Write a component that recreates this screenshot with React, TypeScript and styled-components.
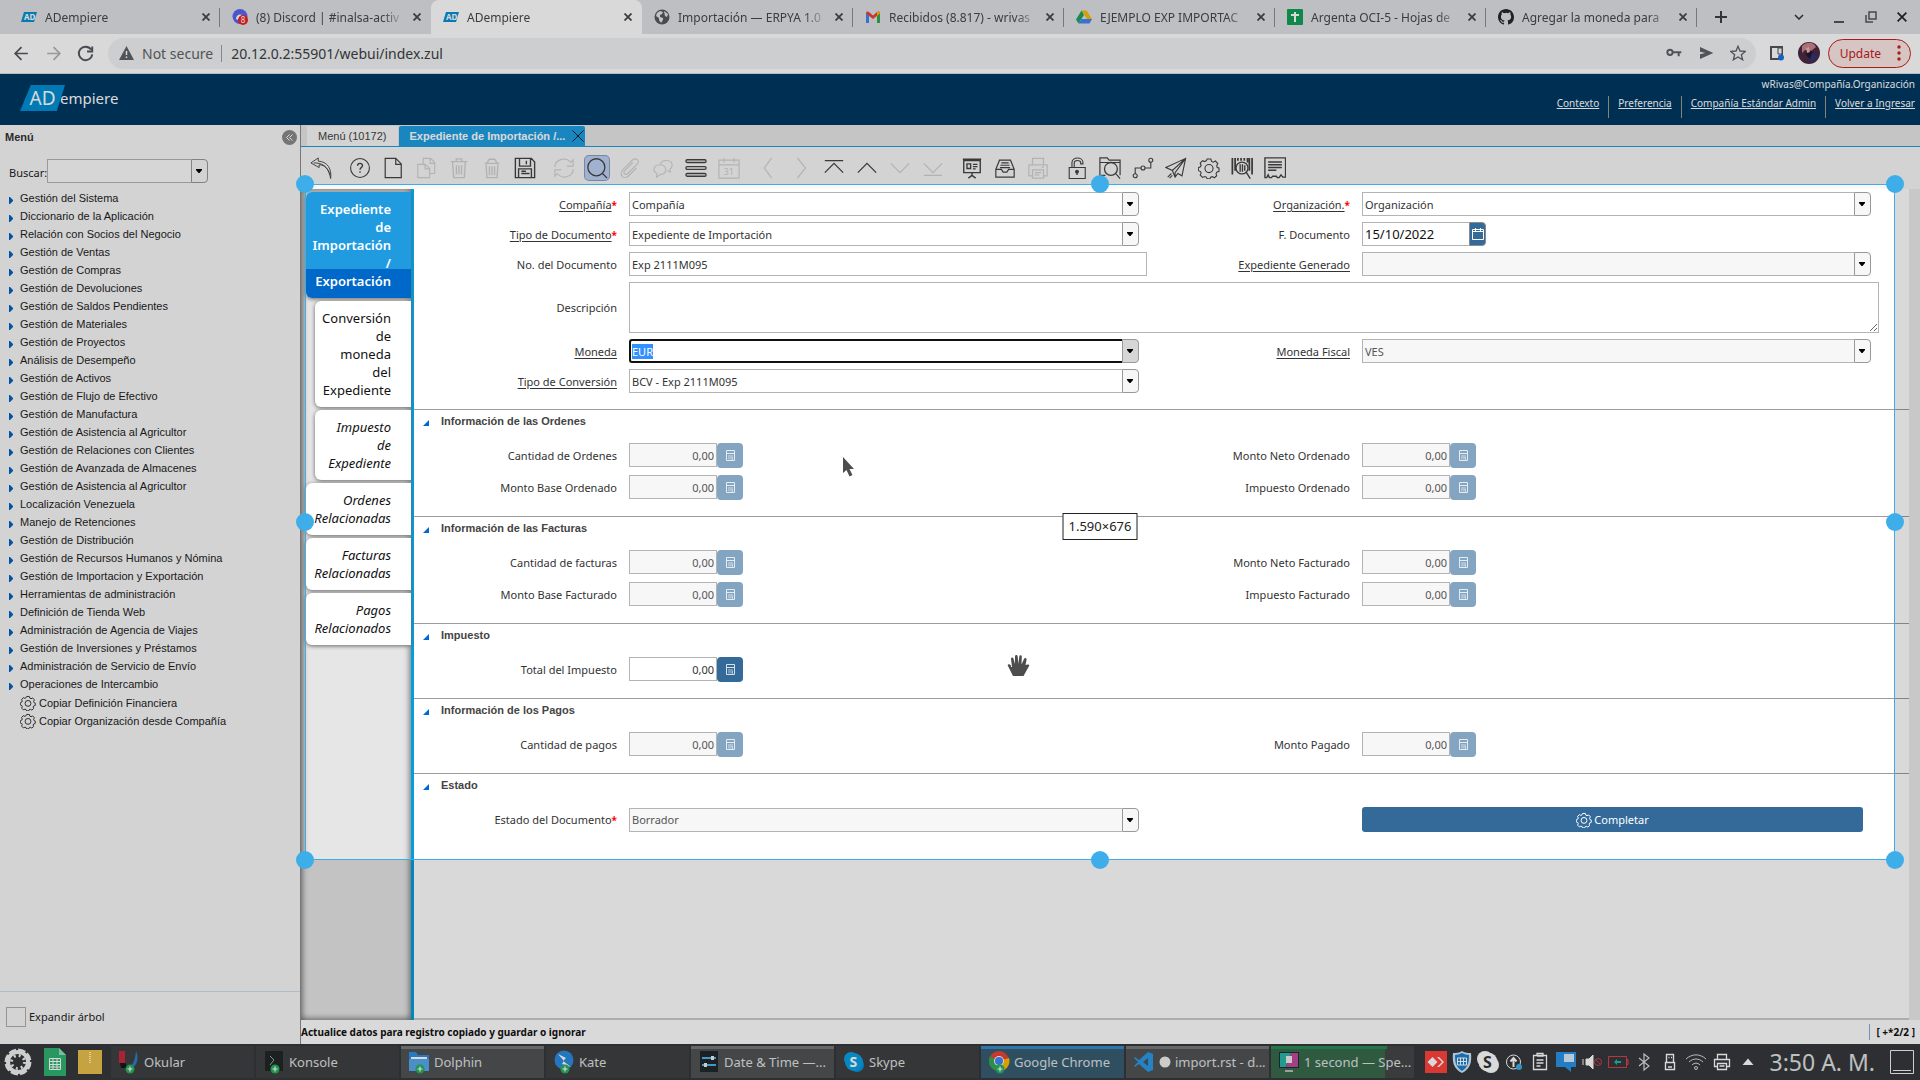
import React, { useEffect, useRef } from "react";
import styled, { createGlobalStyle, css } from "styled-components";

const ui = '"Noto Sans", "Open Sans", sans-serif';
const arial = '"Liberation Sans", Arial, sans-serif';

const GlobalStyle = createGlobalStyle`
  *, *::before, *::after { box-sizing: border-box; }
  body { margin: 0; background: #fff; font-family: ${ui}; font-size: 12px; color: #222; }
  button, input, select, textarea { font: inherit; color: inherit; margin: 0; border-radius: 0; }
  button { border: 0; padding: 0; background: none; }
  ul { list-style: none; margin: 0; padding: 0; }
  svg { display: block; flex: none; }
`;

const Screen = styled.div`
  position: relative;
  display: flex;
  flex-direction: column;
  min-height: 100vh;
  overflow: hidden;
`;

/* ---------- browser ---------- */
const TabStrip = styled.div`
  display: flex;
  align-items: stretch;
  height: 34px;
  padding-left: 9px;
  background: #dee1e6;
`;
const BrowserTab = styled.div<{ $active?: boolean; $line?: boolean }>`
  position: relative;
  display: flex;
  align-items: center;
  flex: 0 1 211px;
  min-width: 0;
  gap: 8px;
  padding: 0 10px 0 12px;
  color: #45484c;
  border-radius: 8px 8px 0 0;
  background: ${(p) => (p.$active ? "#fff" : "transparent")};
  &::after {
    content: "";
    position: absolute;
    right: 0;
    top: 8px;
    width: 1px;
    height: 19px;
    background: ${(p) => (p.$line ? "#8b8e93" : "transparent")};
  }
`;
const TabTitle = styled.span`
  flex: 1;
  overflow: hidden;
  white-space: nowrap;
  mask-image: linear-gradient(90deg, #000 85%, transparent);
`;
const PlainButton = styled.button`
  display: flex;
  align-items: center;
  justify-content: center;
`;
const NewTab = styled(PlainButton)`
  width: 48px;
`;
const WindowControls = styled.div`
  display: flex;
  align-items: center;
  gap: 20px;
  margin-left: auto;
  padding-right: 13px;
`;
const SearchTabs = styled(PlainButton)`
  margin-right: 9px;
`;
const AddressRow = styled.div`
  display: flex;
  align-items: center;
  gap: 13px;
  height: 40px;
  padding: 0 9px 1px 12px;
  background: #fff;
  border-bottom: 1px solid #dadce0;
  color: #55595e;
`;
const Omnibox = styled.div`
  display: flex;
  align-items: center;
  flex: 1;
  height: 31px;
  gap: 8px;
  padding: 0 10px 0 11px;
  border-radius: 16px;
  background: #f1f3f4;
  font-size: 14px;
  color: #5f6368;
`;
const Url = styled.input`
  flex: 1;
  border: 0;
  background: none;
  padding: 0 0 0 9px;
  border-left: 1px solid #9aa0a6;
  height: 17px;
  line-height: 17px;
  outline: none;
  color: #3c4043;
`;
const OmniIcons = styled.div`
  display: flex;
  gap: 16px;
`;
const Profile = styled.div`
  display: flex;
  align-items: center;
  gap: 8px;
`;
const Update = styled.button`
  display: flex;
  align-items: center;
  gap: 16px;
  height: 29px;
  padding: 0 9px 0 11px;
  border: 1px solid #c5221f;
  border-radius: 15px;
  background: #fce8e6;
  color: #c5221f;
`;

/* ---------- application header ---------- */
const Header = styled.header`
  display: flex;
  justify-content: space-between;
  height: 51px;
  padding: 0 5px 0 20px;
  background: #003863;
  color: #fff;
`;
const Logo = styled.div`
  display: flex;
  align-items: center;
  padding-bottom: 3px;
  font-size: 15px;
`;
const LogoMark = styled.span`
  display: flex;
  align-items: center;
  justify-content: center;
  width: 45px;
  height: 26px;
  margin-right: -5px;
  background: #008fd5;
  clip-path: polygon(24% 0, 100% 0, 82% 100%, 0 100%);
  font-size: 19px;
  line-height: 26px;
`;
const UserArea = styled.div`
  padding-top: 3px;
  text-align: right;
  font-size: 10px;
  line-height: 15px;
`;
const UserLinks = styled.nav`
  display: flex;
  justify-content: flex-end;
  margin-top: 4px;
`;
const UserLink = styled.a`
  height: 22px;
  margin-left: 9px;
  padding-right: 9px;
  border-right: 1px solid #a09a86;
  color: #fff;
  &:last-child { border: 0; padding: 0; }
`;

/* ---------- sidebar ---------- */
const Main = styled.main`
  display: flex;
  flex: 1;
`;
const Sidebar = styled.aside`
  display: flex;
  flex-direction: column;
  width: 301px;
  flex: none;
  border-right: 1px solid #8c8c8c;
  background: #f8f8f8;
`;
const SideTitle = styled.div`
  display: flex;
  align-items: center;
  justify-content: space-between;
  height: 24px;
  padding: 0 3px 0 5px;
  font: bold 11px ${arial};
  color: #333;
`;
const Collapse = styled(PlainButton)`
  width: 15px;
  height: 15px;
  border-radius: 50%;
  background: #8a8a8a;
  color: #fff;
`;
const SearchRow = styled.div`
  display: flex;
  align-items: center;
  padding: 10px 9px 6px;
`;
const SearchLabel = styled.label`
  width: 38px;
  padding-top: 2px;
  font-size: 11px;
`;
const Tree = styled.ul`
  font: 11px/18px ${arial};
  color: #1d1d1d;
`;
const TreeItem = styled.button`
  display: flex;
  align-items: center;
  gap: 7px;
  height: 18px;
  padding-left: 9px;
  svg { margin-top: 4px; }
`;
const ProcessList = styled(Tree)`
  padding-top: 1px;
`;
const ProcessItem = styled(TreeItem)`
  gap: 3px;
  padding-left: 20px;
  svg { margin-top: 0; }
`;
const SideFooter = styled.div`
  display: flex;
  align-items: center;
  gap: 3px;
  height: 53px;
  margin-top: auto;
  padding: 0 6px 3px;
  border-top: 1px solid #cfdde8;
  font-size: 11px;
`;
const Check = styled.input`
  appearance: none;
  width: 20px;
  height: 20px;
  border: 1px solid #b0b0b0;
`;

/* ---------- work pane ---------- */
const Pane = styled.section`
  display: flex;
  flex-direction: column;
  flex: 1;
  min-width: 0;
`;
const AppTabs = styled.div`
  display: flex;
  gap: 1px;
  height: 22px;
  padding: 1px 0 0 6px;
  border-bottom: 1px solid #1f9ee2;
  background: #e8e8e8;
`;
const AppTab = styled.button<{ $active?: boolean }>`
  display: flex;
  align-items: center;
  gap: 7px;
  padding: 0 11px;
  font: 11px ${arial};
  color: #444;
  background: #f8f8f8;
  ${(p) =>
    p.$active &&
    css`
      padding-right: 1px;
      font-weight: bold;
      color: #fff;
      background: #1f9ee2;
      border-radius: 2px 2px 0 0;
    `}
`;
const Toolbar = styled.div`
  display: flex;
  align-items: center;
  gap: 15px;
  height: 42px;
  padding-left: 8px;
  background: #f8f8f8;
`;
const ToolGroup = styled.div`
  display: flex;
  gap: 9px;
`;
const Tool = styled.button<{ $on?: boolean }>`
  display: flex;
  align-items: center;
  justify-content: center;
  width: 24px;
  height: 24px;
  border-radius: 4px;
  color: #444;
  &:disabled { color: #d2d2d2; }
  ${(p) =>
    p.$on &&
    css`
      background: #bdd2f5;
      box-shadow: 0 0 0 1px #8c9fc0;
    `}
`;
const Work = styled.div`
  display: flex;
  flex: 1;
`;
const DetailTabs = styled.nav`
  display: flex;
  flex-direction: column;
  gap: 3px;
  flex: none;
  width: 113px;
  padding: 3px 0 0 5px;
  border-right: 3px solid #009fe0;
  background: #e6e6e6;
  box-shadow: inset 0 0 6px 1px #666;
`;
const DetailTab = styled.button<{ $active?: boolean; $sub?: boolean; $italic?: boolean }>`
  margin-left: ${(p) => (p.$sub ? "9px" : "0")};
  padding: 8px 20px 8px 0;
  border-radius: 6px 0 0 6px;
  background: #fff;
  box-shadow: 0 1px 4px #666;
  font-size: 13px;
  line-height: 18px;
  font-style: ${(p) => (p.$italic ? "italic" : "normal")};
  text-align: right;
  white-space: pre-line;
  color: #111;
  ${(p) =>
    p.$active &&
    css`
      font-weight: 600;
      color: #fff;
      background: linear-gradient(#219be0 77px, #0068c8 77px);
    `}
`;
const Form = styled.form`
  flex: 1;
  border-bottom: 2px solid #ccc;
  background: #fff;
`;
const Gutter = styled.div`
  width: 11px;
  background: #ebebeb;
`;
const Fields = styled.div<{ $loose?: boolean }>`
  display: grid;
  grid-template-columns: 203fr 518fr 191fr 517fr;
  column-gap: 12px;
  align-items: center;
  padding: ${(p) => (p.$loose ? "0 30px 16px 0" : "3px 30px 16px 0")};
  row-gap: ${(p) => (p.$loose ? "7px" : "6px")};
`;
const FieldLabel = styled.label<{ $link?: boolean; $right?: boolean }>`
  grid-column: ${(p) => (p.$right ? 3 : 1)};
  justify-self: end;
  font-size: 11px;
  white-space: nowrap;
  color: #333;
  span { text-decoration: ${(p) => (p.$link ? "underline" : "none")}; text-underline-offset: 2px; }
`;
const Star = styled.b`
  font-size: 10px;
  color: #f00;
`;
const box = css`
  height: 24px;
  padding: 0 2px;
  border: 1px solid #b4b4b4;
  background: #fff;
  outline: none;
  font-size: 11px;
  color: #333;
  &:disabled { background: #f7f7f7; color: #555; opacity: 1; }
`;
const Combo = styled.div`
  display: flex;
  margin-right: 8px;
`;
const Select = styled.select`
  ${box}
  flex: 1;
  min-width: 0;
  appearance: none;
  border-right: 0;
`;
const SearchInput = styled.input`
  ${box}
  flex: 1;
  min-width: 0;
  border-right: 0;
  background: #fcfcfc;
`;
const SearchSpace = styled.div`
  flex: 0 0 83px;
`;
const FocusInput = styled.input`
  ${box}
  flex: 1;
  min-width: 0;
  border: 2px solid #101010;
  border-right: 0;
  border-radius: 3px 0 0 3px;
  padding: 0 1px;
  &::selection { background: #3390ff; color: #fff; }
`;
const Arrow = styled.button<{ $dark?: boolean }>`
  display: flex;
  align-items: center;
  justify-content: center;
  width: 17px;
  height: 24px;
  padding-right: 1px;
  border: 1px solid #999;
  border-radius: 0 4px 4px 0;
  background: ${(p) => (p.$dark ? "#d6d6d6" : "#f7f7f7")};
  color: #000;
`;
const TextInput = styled.input`
  ${box}
  width: 100%;
`;
const Area = styled.textarea`
  ${box}
  grid-column: 2 / 5;
  width: 100%;
  height: 51px;
`;
const Inline = styled.div`
  display: flex;
`;
const DateInput = styled.input`
  ${box}
  width: 107px;
  border-right: 0;
  font-size: 13px;
  color: #111;
`;
const DateButton = styled(PlainButton)`
  width: 17px;
  height: 24px;
  border: 1px solid #8a8a8a;
  border-radius: 0 4px 4px 0;
  background: #336a99;
  color: #fff;
`;
const NumInput = styled.input`
  ${box}
  width: 88px;
  text-align: right;
`;
const CalcButton = styled(PlainButton)`
  width: 26px;
  height: 25px;
  border-radius: 4px;
  background: #336a99;
  color: #fff;
  &:disabled { background: #84a5c2; }
`;
const SectionTitle = styled.h2`
  display: flex;
  align-items: flex-start;
  gap: 12px;
  height: 34px;
  margin: 0;
  padding: 4px 0 0 9px;
  border-top: 1px solid #9c9c9c;
  font: bold 11px/14px ${arial};
  color: #444;
  svg { margin-top: 6px; }
`;
const Complete = styled(PlainButton)`
  gap: 2px;
  height: 25px;
  margin-right: 16px;
  border-radius: 3px;
  background: #336a99;
  color: #fff;
  font-size: 11px;
  grid-column: 4;
`;
const StatusBar = styled.footer`
  display: flex;
  align-items: center;
  justify-content: space-between;
  height: 24px;
  padding-right: 5px;
  background: #fff;
  font: bold 10px/16px ${ui};
  color: #111;
`;
const Counter = styled.span`
  padding-left: 6px;
  border-left: 1px solid #8aa9e0;
`;

/* ---------- desktop task bar ---------- */
const TaskBar = styled.footer`
  display: flex;
  align-items: center;
  height: 36px;
  background: #35383b;
  color: #dfe1e2;
`;
const Launchers = styled.div`
  display: flex;
  align-items: center;
  gap: 12px;
  width: 111px;
  padding: 0 0 1px 4px;
`;
const Tasks = styled.div`
  display: flex;
  gap: 2px;
`;
const Task = styled.button<{ $tone?: "open" | "active" | "busy" }>`
  display: flex;
  align-items: center;
  gap: 4px;
  width: 143px;
  height: 32px;
  padding: 0 3px 3px 7px;
  border-top: 3px solid transparent;
  background: #3f4041;
  font-size: 13px;
  white-space: nowrap;
  overflow: hidden;
  ${(p) => p.$tone === "open" && css`background: #525355; border-color: #77797b;`}
  ${(p) => p.$tone === "active" && css`background: #385d73; border-color: #328ccb;`}
  ${(p) => p.$tone === "busy" && css`
    background: linear-gradient(90deg, #386a4c 80%, #454647 80%);
    border-image: linear-gradient(90deg, #288c57 80%, #454647 80%) 3;
  `}
`;
const Tray = styled.div`
  display: flex;
  align-items: center;
  gap: 4px;
  margin-left: auto;
  padding-right: 6px;
`;
const Clock = styled.time`
  padding: 0 11px 0 7px;
  font-size: 23px;
  line-height: 34px;
  white-space: nowrap;
`;

/* ---------- region capture overlay ---------- */
const Capture = styled.div`
  position: absolute;
  top: 184px;
  left: 305px;
  right: 25px;
  height: 676px;
  box-shadow: inset 0 0 0 1px #3daee9, 0 0 0 2400px rgba(0, 0, 0, 0.15);
  pointer-events: none;
`;
const Handle = styled.i<{ $x: number; $y: number }>`
  position: absolute;
  left: ${(p) => p.$x}%;
  top: ${(p) => p.$y}%;
  width: 18px;
  height: 18px;
  margin: -9px;
  border-radius: 50%;
  background: #3daee9;
`;
const SizeTag = styled.output`
  position: absolute;
  left: 50%;
  top: 50%;
  transform: translate(-50%, -9px);
  padding: 0 5px;
  border: 1px solid #222;
  background: #fff;
  font-size: 13px;
  line-height: 25px;
  color: #222;
`;
const Pointer = styled.svg<{ $x: number; $y: number }>`
  position: absolute;
  left: ${(p) => p.$x}px;
  top: ${(p) => p.$y}px;
`;

/* ---------- drawings ---------- */
const Ico = ({ s = 24, w = 1, children }: { s?: number; w?: number; children: React.ReactNode }) => (
  <svg width={s} height={s} viewBox="0 0 24 24" fill="none" stroke="currentColor" strokeWidth={w} aria-hidden="true">
    {children}
  </svg>
);
const gearShape = (
  <>
    <path d="M10 2.200h4l.8 2.600 1.700.8 2.500-1.200 2.600 2.800-1.200 2.400.5 1.600 2 1v3.400l-2.400.9-.8 1.600.7 2.300-2.600 2.200-2.200-1.200-1.800.7-.8 1.800h-3l-.9-2-1.700-.6-2.400 1-2.600-2.600 1-2.200-.7-1.600-2.300-1v-3.200l2.200-1 .8-1.700-1-2.400 2.600-2.600 2.200 1 1.800-.8z" />
    <circle cx="12" cy="12.600" r="4.400" />
  </>
);
const GearIcon = ({ s = 24, w = 1.2 }: { s?: number; w?: number }) => (
  <Ico s={s} w={w}>{gearShape}</Ico>
);
const Down = () => (
  <svg width="6" height="4" viewBox="0 0 6 4" fill="currentColor" aria-hidden="true">
    <path d="M0 0h6v1L3.500 4h-1L0 1z" />
  </svg>
);
const Cross = ({ s = 8, w = 1.8 }: { s?: number; w?: number }) => (
  <svg width={s} height={s} viewBox="0 0 8 8" stroke="currentColor" strokeWidth={w} aria-hidden="true">
    <path d="M.5.5l7 7M7.500.5l-7 7" />
  </svg>
);
const CalcIcon = () => (
  <svg width="9" height="11" viewBox="0 0 9 11" fill="none" stroke="currentColor" aria-hidden="true" opacity=".8">
    <path d="M.5.5h8v10h-8zM1 3.500h7" />
    <path d="M2 5h5v4.500H2z" fill="currentColor" stroke="none" opacity=".4" />
    <path d="M6.500 7v3" opacity=".6" />
  </svg>
);

const tools: { n: string; off?: boolean; on?: boolean; d: React.ReactNode }[][] = [
  [{ n: "Deshacer", d: <path d="M9 1L1 6.500l9 5V8.500c6 0 10.500 4 12.500 15C24 13 19 5 9 4.500zM4 6.500c9-.5 15 4 18 13" strokeWidth="1" /> }],
  [
    { n: "Ayuda", d: <><circle cx="12" cy="12" r="10.300" /><path d="M9.300 9.500c.2-3.500 5.500-3.300 5.400 0-.1 2-2.700 2.200-2.700 4.500M12 15.500v1.600" strokeWidth="1.500" /></> },
    { n: "Nuevo", d: <path d="M3.500 1.500h11.500l6 6V22.500h-17.500zM15 1.500V8h6" strokeWidth="1.300" /> },
    { n: "Copiar", off: true, d: <path d="M9 8V1.500h8l4.500 4.500V18h-5M16.500 1.500V7h5M3 8h8l5 4.500V22.500H3zM11 8v5h5" /> },
    { n: "Eliminar", off: true, d: <path d="M3 5h18M9 5V2h6v3M5 5.500l1.200 17h11.600l1.200-17M9.200 9v10M12 9v10M14.800 9v10" strokeWidth="1.500" /> },
    { n: "Eliminar selección", off: true, d: <path d="M4 7h16M6.500 6.500l2.500-4h6l2.500 4M5.500 8l1 14.500h11l1-14.500M9.200 10v10M12 10v10M14.800 10v10" strokeWidth="1.500" /> },
    { n: "Guardar", d: <path d="M1.500 1.500h17.500l3.500 4v17h-21zM6 2v8h12V2M13.500 4v4M5 22v-9h14v9M8 15.500h5M8 18h9" strokeWidth="1.500" /> },
  ],
  [
    { n: "Refrescar", off: true, d: <path d="M2 11C2 3.500 13-1.500 19.500 6l2.500-3v7h-7M22 13C22 21 11 25.500 4.500 18L2 21v-7h7" /> },
    { n: "Buscar registro", on: true, d: <path d="M2 11.200a9.300 9.300 0 1018.600 0 9.300 9.300 0 10-18.600 0M18 18l5 5" strokeWidth="1.400" /> },
    { n: "Adjunto", off: true, d: <path d="M15 6L6 15c-2 3 1.500 5 3.500 3L20 7.500c3-4-1.500-7-5-4.500L4.500 13.500C-1 20 6 25 10 21l9-9" strokeWidth="1.200" /> },
    { n: "Conversación", off: true, d: <path d="M9 8c2-6 13-5.500 13 1 0 2-1 3.500-2.500 4.500l.5 3-3.500-1.800M8.500 8.500c8.500-.5 8.500 10.500 1 10.500L5 22l.5-4C0 15 1.500 9 8.500 8.500z" /> },
    { n: "Vista de lista", d: <><rect x="1" y="3" width="22" height="3" rx="1.500" strokeWidth="1.400" /><rect x="1" y="10.500" width="22" height="3" rx="1.500" strokeWidth="1.400" /><rect x="1" y="18" width="22" height="3" rx="1.500" strokeWidth="1.400" /></> },
    { n: "Calendario", off: true, d: <><path d="M1 3.500h22v19.500h-22zM1 8.500h22M6.500 1v5M17.500 1v5" strokeWidth="1.300" /><text x="6" y="20" fontSize="10" fill="currentColor" stroke="none">31</text></> },
  ],
  [
    { n: "Registro anterior", off: true, d: <path d="M16 1L8 12l8 11" strokeWidth="1.300" /> },
    { n: "Registro siguiente", off: true, d: <path d="M8 1l9 11-9 11" strokeWidth="1.300" /> },
    { n: "Primero", d: <path d="M2 4h20M2 17L12 7l10 10" strokeWidth="1.400" /> },
    { n: "Anterior", d: <path d="M2 17L12 7l10 10" strokeWidth="1.400" /> },
    { n: "Siguiente", off: true, d: <path d="M2 7l10 10L22 7" strokeWidth="1.300" /> },
    { n: "Último", off: true, d: <path d="M2 7l10 10L22 7M2 20h20" strokeWidth="1.300" /> },
  ],
  [
    { n: "Informe", d: <path d="M2 2.500h20M3 4h18v13H3zM6.500 7.500h4v5h-4zM13 8h5M13 10.500h5M13 13h3M12 17v3l-4 3M12 20l4 3" strokeWidth="1.500" /> },
    { n: "Archivo", d: <path d="M6 3.500h12l4 10v8.500H2v-8.500zM2 13.500h6l2 3h4l2-3h6M8 6.500h8M7 9h10M6.500 11.500h11" strokeWidth="1.300" /> },
    { n: "Imprimir", off: true, d: <path d="M6 8V1.500h12V8M2 8.500h20V20.500h-4M6 20.500H2V8.500M6 14h12v9H6zM8.500 17h7M8.500 19.500h5M16 11h2.500" strokeWidth="1.300" /> },
  ],
  [
    { n: "Bloquear", d: <><path d="M3.500 11.500h17.500V23.500h-17.500zM6.500 11V6c0-6.500 12-6.500 12 0v1.500h-2.500V6c0-3-7-3-7 0v5" strokeWidth="1.200" /><circle cx="12" cy="16" r="1.500" fill="currentColor" /><path d="M12 16v3.500" strokeWidth="1.500" /></> },
    { n: "Zoom", d: <><path d="M7 20H1V1h8l2 2.500H23V20M1 6h22M18.500 18.500l4.500 5" strokeWidth="1.300" /><circle cx="13" cy="13" r="7" strokeWidth="1.400" /></> },
    { n: "Flujo de trabajo", d: <><circle cx="3.500" cy="20.500" r="2.200" /><circle cx="12" cy="12" r="2.200" /><circle cx="20.500" cy="3.500" r="2.200" /><path d="M3.500 18.500V12H10M14 12h6.500V5.500" strokeWidth="1.200" /></> },
    { n: "Solicitudes", d: <path d="M22.500 1.500L1 11.500l7 3.200L11 22l3-4 4.500 2.500zM22.500 1.500L8 14.700M22.500 1.500L11 17v5M3 22l4-4M5 23l3-3" strokeWidth="1.200" /> },
    { n: "Proceso", d: gearShape },
    { n: "Código de producto", d: <><path d="M1.500 1v18M4.500 1v14M7.500 1v3M11 1v3M14.500 1v3M18 1v5M20 1v14M23 1v18" strokeWidth="1.900" /><circle cx="12" cy="12" r="6.500" strokeWidth="1.400" /><path d="M10 8v8M12.500 8v8M15 9v6M16.500 16.500L21 23.500" strokeWidth="1.500" /></> },
    { n: "Recibo", d: <path d="M1 1h22.500V22h-3l-2-2.500-2 3h-2l-1-1.500h-4L8 22.500H6L4.500 19.500l-1.500 3H1zM4.500 5.500h15M4.500 8.500h15M4.500 11.500h15M4.500 14.500h9" strokeWidth="1.500" /> },
  ],
];

const menu = [
  "Gestión del Sistema", "Diccionario de la Aplicación", "Relación con Socios del Negocio", "Gestión de Ventas",
  "Gestión de Compras", "Gestión de Devoluciones", "Gestión de Saldos Pendientes", "Gestión de Materiales",
  "Gestión de Proyectos", "Análisis de Desempeño", "Gestión de Activos", "Gestión de Flujo de Efectivo",
  "Gestión de Manufactura", "Gestión de Asistencia al Agricultor", "Gestión de Relaciones con Clientes",
  "Gestión de Avanzada de Almacenes", "Gestión de Asistencia al Agricultor", "Localización Venezuela",
  "Manejo de Retenciones", "Gestión de Distribución", "Gestión de Recursos Humanos y Nómina",
  "Gestión de Importacion y Exportación", "Herramientas de administración", "Definición de Tienda Web",
  "Administración de Agencia de Viajes", "Gestión de Inversiones y Préstamos", "Administración de Servicio de Envío",
  "Operaciones de Intercambio",
];
const processes = ["Copiar Definición Financiera", "Copiar Organización desde Compañía"];

const AdIcon = () => (
  <svg width="16" height="16" viewBox="0 0 16 16" aria-hidden="true">
    <path d="M3 3h13l-3 10H0z" fill="#0b8fd0" />
    <text x="3" y="11" fontSize="8" fontWeight="bold" fill="#fff" fontFamily="Noto Sans">AD</text>
  </svg>
);
const favicons = {
  ad: <AdIcon />,
  discord: (
    <svg width="16" height="16" viewBox="0 0 16 16" aria-hidden="true">
      <circle cx="8" cy="7.500" r="7.500" fill="#5865f2" />
      <path d="M4 10c0-6 8-6 8 0l-2 1H6z" fill="#fff" />
      <circle cx="11" cy="11" r="5" fill="#e22" />
      <text x="8.800" y="14" fontSize="8" fill="#fff" fontFamily="Noto Sans">8</text>
    </svg>
  ),
  globe: (
    <svg width="16" height="16" viewBox="0 0 16 16" aria-hidden="true">
      <circle cx="8" cy="8" r="7.500" fill="#55595e" />
      <path d="M3 4l3-2 3 1-1 2-2 1v2l3 1v2l-2 3-2-3V9L2 7zM10 2l4 3-1 3-2-1z" fill="#e4e6ea" />
    </svg>
  ),
  gmail: (
    <svg width="16" height="16" viewBox="0 0 16 16" aria-hidden="true">
      <path d="M1 14V4h3v10z" fill="#4285f4" /><path d="M12 14V4h3v10z" fill="#34a853" />
      <path d="M1 4.500C1 2 3 2 4 3l4 3.500L12 3c1-1 3-1 3 1.500L8 10z" fill="#ea4335" />
      <path d="M12 3c1-1 3-1 3 1.500L12 7z" fill="#fbbc04" />
    </svg>
  ),
  drive: (
    <svg width="16" height="16" viewBox="0 0 16 16" aria-hidden="true">
      <path d="M5.500 1.500h5L16 10h-5z" fill="#fbbc04" /><path d="M5.500 1.500L0 10.500 2.500 14.500 8 6z" fill="#1ea362" />
      <path d="M16 10H5.500l-3 4.500h11z" fill="#4285f4" />
    </svg>
  ),
  sheets: (
    <svg width="16" height="16" viewBox="0 0 16 16" aria-hidden="true">
      <rect width="16" height="16" rx="1" fill="#12a05a" /><path d="M8 3v10M4 6h8" stroke="#fff" strokeWidth="2" />
    </svg>
  ),
  github: (
    <svg width="16" height="16" viewBox="0 0 16 16" aria-hidden="true">
      <path fill="#24292f" d="M8 0C3.580 0 0 3.580 0 8c0 3.540 2.290 6.530 5.470 7.590.4.070.55-.17.55-.38v-1.490c-2.010.37-2.530-.49-2.690-.94-.09-.23-.48-.94-.82-1.130-.28-.15-.68-.52-.01-.53.63-.01 1.080.58 1.230.82.72 1.210 1.870.87 2.330.66.07-.52.28-.87.51-1.070-1.780-.2-3.640-.89-3.640-3.950 0-.87.31-1.590.82-2.150-.08-.2-.36-1.020.08-2.120 0 0 .67-.21 2.200.82a7.500 7.500 0 014 0c1.530-1.040 2.200-.82 2.200-.82.44 1.100.16 1.920.08 2.120.51.56.82 1.270.82 2.150 0 3.070-1.870 3.750-3.650 3.950.29.25.54.73.54 1.480v2.200c0 .21.15.46.55.38A8 8 0 0016 8c0-4.420-3.580-8-8-8z" />
    </svg>
  ),
};
const browserTabs: { icon: keyof typeof favicons; t: string; active?: boolean; line?: boolean }[] = [
  { icon: "ad", t: "ADempiere", line: true },
  { icon: "discord", t: "(8) Discord | #inalsa-activ" },
  { icon: "ad", t: "ADempiere", active: true },
  { icon: "globe", t: "Importación — ERPYA 1.0", line: true },
  { icon: "gmail", t: "Recibidos (8.817) - wrivas", line: true },
  { icon: "drive", t: "EJEMPLO EXP IMPORTAC", line: true },
  { icon: "sheets", t: "Argenta OCI-5 - Hojas de", line: true },
  { icon: "github", t: "Agregar la moneda para", line: true },
];

const Plus = () => (
  <><circle cx="12" cy="19" r="4.500" fill="#27ae60" /><path d="M12 16.500v5M9.500 19h5" stroke="#fff" strokeWidth="1.200" /></>
);
const taskIcon = (n: string) => (
  <svg width="22" height="24" viewBox="0 0 22 24" aria-hidden="true">
    {n === "okular" && <><path d="M1 1h6v12H1z" fill="#c8283c" /><path d="M9 18C16 16 17 9 18 1c3 6 2 14-5 18z" fill="#2a7fc4" /><path d="M2 13h5l3 5H3z" fill="#15181a" /><Plus /></>}
    {n === "konsole" && <><path d="M2 1h18v20H2z" fill="#232627" /><path d="M7 6l4 4-4 5" stroke="#9aa" fill="none" /><Plus /></>}
    {n === "dolphin" && <><path d="M1 2h7l2 3h11v16H1z" fill="#2f8fe0" /><path d="M3 7h16v3H3z" fill="#fff" /><path d="M1 9h20v12H1z" fill="#57a8ee" /><Plus /></>}
    {n === "kate" && <><circle cx="11" cy="10" r="9.500" fill="#2b8ce0" /><path d="M5 4l8 4-3 3 8 6-9-3 2-3z" fill="#fff" /><Plus /></>}
    {n === "date" && <><path d="M2 1h18v21H2z" fill="#22272a" /><path d="M4 8h14M4 15h14" stroke="#4db4e8" strokeWidth="2" /><path d="M13 6h3v4h-3zM6 13h3v4H6z" fill="#eee" /></>}
    {n === "skype" && <><circle cx="8" cy="9" r="7" fill="#0aa2e8" /><circle cx="14" cy="15" r="7" fill="#0a8fdc" /><circle cx="11" cy="12" r="9" fill="#0a9fe4" /><text x="6.500" y="17" fontSize="14" fontWeight="bold" fill="#fff" fontFamily="Noto Sans">S</text></>}
    {n === "chrome" && <><circle cx="11" cy="11" r="10" fill="#ea4335" /><path d="M11 11L2 6.500A10 10 0 0010 21z" fill="#34a853" /><path d="M11 11l10-3a10 10 0 01-11 13z" fill="#fbbc04" /><circle cx="11" cy="11" r="5" fill="#fff" /><circle cx="11" cy="11" r="4" fill="#4285f4" /><Plus /></>}
    {n === "code" && <path d="M15 2l5 2v16l-5 2L6 14l-4 3-1-1 4-4-4-4 1-1 4 3zM15 8l-5 4 5 4z" fill="#2a9be8" fillRule="evenodd" />}
    {n === "spectacle" && <><path d="M1 2h20v16H1z" fill="#18303a" /><path d="M2 3h11l-5 14H2z" fill="#2bb6a8" /><path d="M13 3h7v14H8z" fill="#c14a9c" /><path d="M8 6h6v7H8z" fill="#eee" /><path d="M7 21h8" stroke="#bbb" strokeWidth="2" /></>}
  </svg>
);
const tasks: { i: string; t: string; dot?: boolean; tone?: "open" | "active" | "busy" }[] = [
  { i: "okular", t: "Okular" }, { i: "konsole", t: "Konsole" }, { i: "dolphin", t: "Dolphin", tone: "open" },
  { i: "kate", t: "Kate" }, { i: "date", t: "Date & Time  —...", tone: "open" }, { i: "skype", t: "Skype" },
  { i: "chrome", t: "Google Chrome", tone: "active" }, { i: "code", t: "import.rst - d...", dot: true, tone: "open" },
  { i: "spectacle", t: "1 second — Spe...", tone: "busy" },
];
const trayIcons: React.ReactNode[] = [
  <><path d="M0 0h22v22H0z" fill="#ff443b" /><path d="M7.500 6l5 5-5 5-5-5zM12 6h2l5 5-5 5h-2l5-5z" fill="#fff" /></>,
  <><path d="M11 0c3 2 6 2 9 2 1 10-1 16-9 20C3 18 1 12 2 2c3 0 6 0 9-2z" fill="#cfe6f8" /><path d="M11 2c2 1 5 2 7 2 0 8-1 12-7 16C5 16 4 12 4 4c2 0 5-1 7-2z" fill="#1f7fd0" /><path d="M6.500 7h9v7h-9zM6.500 10.500h9M9.500 7v7M12.500 7v7" stroke="#fff" fill="none" /></>,
  <><rect width="16" height="16" rx="8" fill="#fff" /><rect x="6" y="6" width="16" height="16" rx="8" fill="#fff" /><circle cx="11" cy="11" r="9.500" fill="#fff" /><text x="6" y="17" fontSize="16" fontWeight="bold" fill="#333" fontFamily="Noto Sans">S</text></>,
  <><circle cx="10.500" cy="11" r="7" stroke="#fff" fill="none" /><path d="M10.500 16V8M7.500 10.500l3-3.500 3 3.500" stroke="#fff" strokeWidth="2" fill="none" /><circle cx="16" cy="16" r="3" fill="#3daee9" /></>,
  <path d="M4.500 4.500h13v14h-13zM8 4V2.500h6V5H8M7.500 9h7M7.500 12h7M7.500 15h4" stroke="#fff" strokeWidth="1.300" fill="none" />,
  <><path d="M1 1h20v15h-5v5l-6-5H1z" fill="#2a93e8" /><path d="M9 3h10v8H9z" fill="#d8ecfb" /></>,
  <><path d="M2 8v6M5 8h3l4-4v14l-4-4H5z" fill="#fff" stroke="#fff" /><circle cx="17" cy="11" r="3.500" stroke="#c8404c" fill="none" /><path d="M15 9l4 4" stroke="#c8404c" /></>,
  <><path d="M1.500 5.500h18v11h-18zM20 8.500h1v5h-1z" stroke="#d8404f" fill="none" /><path d="M7 11l3-3v2h4v2h-4v2z" fill="#1abc9c" /></>,
  <path d="M6 7l10 8-5 4V3l5 4-10 8" stroke="#ddd" strokeWidth="1.200" fill="none" />,
  <path d="M7.500 3.500h7v8h-7zM6.500 11.500h9v7h-9zM9 16h4M9.500 6.500h1M12 6.500h1" stroke="#fff" strokeWidth="1.400" fill="none" />,
  <path d="M1 8c6-5.500 14-5.500 20 0M4 11c4-4 10-4 14 0M7 14c2.500-2.500 5.500-2.500 8 0M9.500 17a1.500 1.500 0 103 0 1.500 1.500 0 10-3 0" stroke="#ddd" fill="none" />,
  <path d="M6.500 8V3.500h9V8M6 15.500H3.500v-7h15v7H16M6.500 12.500h9v6h-9zM8.500 15h5" stroke="#fff" strokeWidth="1.300" fill="none" />,
  <path d="M11 7.500l5.500 6.500h-11z" fill="#fff" />,
];

/* ---------- fields ---------- */
type FieldProps = { id: string; label: string; right?: boolean; link?: boolean; req?: boolean };
const Label = ({ id, label, right, link, req }: FieldProps) => (
  <FieldLabel htmlFor={id} $right={right} $link={link}>
    <span>{label}</span>
    {req && <Star>*</Star>}
  </FieldLabel>
);
const ComboField = ({ value, off, ...f }: FieldProps & { value: string; off?: boolean }) => (
  <>
    <Label {...f} />
    <Combo>
      <Select id={f.id} disabled={off} defaultValue={value}>
        <option>{value}</option>
      </Select>
      <Arrow type="button" tabIndex={-1} aria-label={`Abrir ${f.label}`}><Down /></Arrow>
    </Combo>
  </>
);
const NumField = ({ on, ...f }: FieldProps & { on?: boolean }) => (
  <>
    <Label {...f} />
    <Inline>
      <NumInput id={f.id} defaultValue="0,00" disabled={!on} />
      <CalcButton type="button" disabled={!on} aria-label={`Calculadora: ${f.label}`}><CalcIcon /></CalcButton>
    </Inline>
  </>
);
const Section = ({ title, children }: { title: string; children: React.ReactNode }) => (
  <section>
    <SectionTitle>
      <svg width="6" height="6" aria-hidden="true"><path d="M6 0v6H0z" fill="#0068d0" /></svg>
      {title}
    </SectionTitle>
    <Fields $loose>{children}</Fields>
  </section>
);

export default function App() {
  const currency = useRef<HTMLInputElement>(null);
  useEffect(() => {
    currency.current?.focus();
    currency.current?.select();
  }, []);
  return (
    <Screen>
      <GlobalStyle />
      <TabStrip>
        {browserTabs.map((b, i) => (
          <BrowserTab key={i} $active={b.active} $line={b.line}>
            {favicons[b.icon]}
            <TabTitle>{b.t}</TabTitle>
            <PlainButton aria-label="Cerrar pestaña"><Cross /></PlainButton>
          </BrowserTab>
        ))}
        <NewTab aria-label="Nueva pestaña">
          <svg width="12" height="12" stroke="#3c4043" strokeWidth="2"><path d="M6 0v12M0 6h12" /></svg>
        </NewTab>
        <WindowControls>
          <SearchTabs aria-label="Buscar pestañas"><svg width="10" height="6" fill="none" stroke="#333" strokeWidth="1.500"><path d="M1 1l4 4 4-4" /></svg></SearchTabs>
          <PlainButton aria-label="Minimizar"><svg width="12" height="12" stroke="#555" strokeWidth="2"><path d="M1 11h10" /></svg></PlainButton>
          <PlainButton aria-label="Restaurar"><svg width="12" height="12" fill="none" stroke="#555" strokeWidth="1.500"><path d="M4 1h7v7H4zM1 4v7h7" /></svg></PlainButton>
          <PlainButton aria-label="Cerrar"><Cross s={10} w={1.300} /></PlainButton>
        </WindowControls>
      </TabStrip>
      <AddressRow>
        <PlainButton aria-label="Atrás"><Ico s={19} w={2.200}><path d="M20 12H4M12 4l-8 8 8 8" /></Ico></PlainButton>
        <PlainButton aria-label="Adelante"><svg width="19" height="19" viewBox="0 0 24 24" fill="none" stroke="#b2b5b8" strokeWidth="2.200"><path d="M4 12h16M12 4l8 8-8 8" /></svg></PlainButton>
        <PlainButton aria-label="Recargar"><Ico s={19} w={2.400}><path d="M19 7a8.500 8.500 0 101.500 6M20.500 3v6.500H14" /></Ico></PlainButton>
        <Omnibox>
          <svg width="15" height="14" viewBox="0 0 15 14"><path d="M7.500 0L15 14H0z" fill="#5f6368" /><path d="M7.500 5v4M7.500 10.500V12" stroke="#fff" strokeWidth="1.500" /></svg>
          <span>Not secure</span>
          <Url aria-label="Dirección" defaultValue="20.12.0.2:55901/webui/index.zul" />
          <OmniIcons>
            <Ico s={16} w={3}><circle cx="6" cy="11" r="4" /><path d="M10 11h13M19 11v6" /></Ico>
            <svg width="16" height="16" viewBox="0 0 24 24" fill="#5f6368"><path d="M3 3l20 9L3 21v-7l8-2-8-2z" /></svg>
            <Ico s={16} w={2}><path d="M12 2l3 7 8 .6-6 5 2 7.600-7-4.200-7 4.200 2-7.600-6-5L9 9z" /></Ico>
          </OmniIcons>
        </Omnibox>
        <svg width="16" height="16" viewBox="0 0 16 16"><path d="M2 2h11v12H2z" fill="none" stroke="#50545a" strokeWidth="2" /><path d="M9 3h4v6H9z" fill="#fff" stroke="#50545a" /><circle cx="12" cy="12.500" r="3" fill="#1a73e8" /></svg>
        <Profile>
          <svg width="22" height="22" viewBox="0 0 22 22"><circle cx="11" cy="11" r="11" fill="#4a2a44" /><path d="M4 4c5-5 12-4 14 1l-5 4-6-1-3 3z" fill="#c9838a" /><path d="M8 8l6 1 2 5-4 3-4-4z" fill="#241730" /><path d="M14 11l5 3-3 5-5 1z" fill="#2c3478" /><path d="M8 6l3-1 1 5-3 1z" fill="#e8b4ac" /></svg>
          <Update>Update<svg width="4" height="16" fill="#c5221f"><circle cx="2" cy="2" r="1.700" /><circle cx="2" cy="8" r="1.700" /><circle cx="2" cy="14" r="1.700" /></svg></Update>
        </Profile>
      </AddressRow>

      <Header>
        <Logo><LogoMark>AD</LogoMark>empiere</Logo>
        <UserArea>
          wRivas@Compañía.Organización
          <UserLinks>
            {["Contexto", "Preferencia", "Compañía Estándar Admin", "Volver a Ingresar"].map((l) => (
              <UserLink key={l} href="#">{l}</UserLink>
            ))}
          </UserLinks>
        </UserArea>
      </Header>

      <Main>
        <Sidebar>
          <SideTitle>
            Menú
            <Collapse aria-label="Contraer menú"><svg width="7" height="7" fill="none" stroke="currentColor"><path d="M3.500.5l-3 3 3 3M6.500.5l-3 3 3 3" /></svg></Collapse>
          </SideTitle>
          <SearchRow>
            <SearchLabel htmlFor="buscar">Buscar:</SearchLabel>
            <SearchInput id="buscar" />
            <Arrow aria-label="Abrir búsqueda"><Down /></Arrow>
            <SearchSpace />
          </SearchRow>
          <Tree>
            {menu.map((m, i) => (
              <li key={i}><TreeItem><svg width="4" height="7"><path d="M0 0h1l3 3v1L1 7H0z" fill="#0062c0" /></svg>{m}</TreeItem></li>
            ))}
          </Tree>
          <ProcessList>
            {processes.map((p) => (
              <li key={p}><ProcessItem><GearIcon s={16} w={1.300} />{p}</ProcessItem></li>
            ))}
          </ProcessList>
          <SideFooter>
            <Check type="checkbox" id="expandir" />
            <label htmlFor="expandir">Expandir árbol</label>
          </SideFooter>
        </Sidebar>

        <Pane>
          <AppTabs>
            <AppTab>Menú (10172)</AppTab>
            <AppTab $active>Expediente de Importación /...<svg width="12" height="12" stroke="#0b2033"><path d="M.5.5l11 11M11.500.5l-11 11" /></svg></AppTab>
          </AppTabs>
          <Toolbar>
            {tools.map((g, i) => (
              <ToolGroup key={i}>
                {g.map((t) => (
                  <Tool key={t.n} title={t.n} aria-label={t.n} disabled={t.off} $on={t.on}><Ico s={22} w={1.200}>{t.d}</Ico></Tool>
                ))}
              </ToolGroup>
            ))}
          </Toolbar>
          <Work>
            <DetailTabs>
              <DetailTab $active>{"Expediente\nde\nImportación\n/\nExportación"}</DetailTab>
              <DetailTab $sub>{"Conversión\nde\nmoneda\ndel\nExpediente"}</DetailTab>
              <DetailTab $sub $italic>{"Impuesto\nde\nExpediente"}</DetailTab>
              <DetailTab $italic>{"Ordenes\nRelacionadas"}</DetailTab>
              <DetailTab $italic>{"Facturas\nRelacionadas"}</DetailTab>
              <DetailTab $italic>{"Pagos\nRelacionados"}</DetailTab>
            </DetailTabs>
            <Form>
              <Fields>
                <ComboField id="compania" label="Compañía" link req value="Compañía" />
                <ComboField id="org" label="Organización." link req right value="Organización" />
                <ComboField id="tipo" label="Tipo de Documento" link req value="Expediente de Importación" />
                <Label id="fecha" label="F. Documento" right />
                <Inline>
                  <DateInput id="fecha" defaultValue="15/10/2022" />
                  <DateButton type="button" aria-label="Calendario">
                    <svg width="12" height="13" fill="none" stroke="currentColor"><path d="M.5 1.500h11v10H.5zM.5 3.500h11M3.500 0v3M8.500 0v3" /></svg>
                  </DateButton>
                </Inline>
                <Label id="numero" label="No. del Documento" />
                <TextInput id="numero" defaultValue="Exp 2111M095" />
                <ComboField id="generado" label="Expediente Generado" link right off value="" />
                <Label id="desc" label="Descripción" />
                <Area id="desc" />
                <Label id="moneda" label="Moneda" link />
                <Combo>
                  <FocusInput id="moneda" ref={currency} role="combobox" aria-expanded="false" defaultValue="EUR" />
                  <Arrow type="button" $dark aria-label="Abrir Moneda"><Down /></Arrow>
                </Combo>
                <ComboField id="fiscal" label="Moneda Fiscal" link right off value="VES" />
                <ComboField id="conversion" label="Tipo de Conversión" link value="BCV - Exp 2111M095" />
              </Fields>
              <Section title="Información de las Ordenes">
                <NumField id="o1" label="Cantidad de Ordenes" />
                <NumField id="o2" label="Monto Neto Ordenado" right />
                <NumField id="o3" label="Monto Base Ordenado" />
                <NumField id="o4" label="Impuesto Ordenado" right />
              </Section>
              <Section title="Información de las Facturas">
                <NumField id="f1" label="Cantidad de facturas" />
                <NumField id="f2" label="Monto Neto Facturado" right />
                <NumField id="f3" label="Monto Base Facturado" />
                <NumField id="f4" label="Impuesto Facturado" right />
              </Section>
              <Section title="Impuesto">
                <NumField id="i1" label="Total del Impuesto" on />
              </Section>
              <Section title="Información de los Pagos">
                <NumField id="p1" label="Cantidad de pagos" />
                <NumField id="p2" label="Monto Pagado" right />
              </Section>
              <Section title="Estado">
                <ComboField id="estado" label="Estado del Documento" req off value="Borrador" />
                <Complete type="button"><GearIcon s={16} w={1.500} />Completar</Complete>
              </Section>
            </Form>
            <Gutter />
          </Work>
          <StatusBar>
            <span>Actualice datos para registro copiado y guardar o ignorar</span>
            <Counter>[ +*2/2 ]</Counter>
          </StatusBar>
        </Pane>
      </Main>

      <TaskBar>
        <Launchers>
          <PlainButton aria-label="Aplicaciones"><svg width="28" height="28" viewBox="0 0 28 28"><circle cx="14" cy="14" r="11.500" fill="none" stroke="#f2f2f2" strokeWidth="4" strokeDasharray="7 2" /><circle cx="14" cy="14" r="10" fill="none" stroke="#f2f2f2" strokeWidth="4" /><circle cx="14" cy="14" r="6.500" fill="none" stroke="#f2f2f2" strokeWidth="3" strokeDasharray="2 3.100" /></svg></PlainButton>
          <PlainButton aria-label="Hoja de cálculo"><svg width="22" height="28" viewBox="0 0 22 28"><path d="M0 0h15l7 7v21H0z" fill="#2fb371" /><path d="M15 0v7h7z" fill="#8fe0b5" /><path d="M5.500 10.500h11v11h-11zM5.500 13.500h11M5.500 16.500h11M5.500 19h11M9 10.500v11M13 10.500v11" stroke="#fff" fill="none" /></svg></PlainButton>
          <PlainButton aria-label="Archivos comprimidos"><svg width="24" height="24"><path d="M0 0h24v24H0z" fill="#e8c04c" /><path d="M12 2v12" stroke="#fff3c4" strokeWidth="2" strokeDasharray="1 1" /></svg></PlainButton>
        </Launchers>
        <Tasks>
          {tasks.map((t) => (
            <Task key={t.i} $tone={t.tone}>
              {taskIcon(t.i)}
              {t.dot && <svg width="12" height="12" aria-hidden="true"><circle cx="6" cy="6" r="5.500" fill="#f0f0f0" /></svg>}
              <span>{t.t}</span>
            </Task>
          ))}
        </Tasks>
        <Tray>
          {trayIcons.map((d, i) => (
            <svg key={i} width="22" height="22" viewBox="0 0 22 22" aria-hidden="true">{d}</svg>
          ))}
          <Clock>3:50 A. M.</Clock>
          <PlainButton aria-label="Mostrar escritorio"><svg width="24" height="24" fill="none" stroke="#f2f2f2"><path d="M.5.5h23v23H.5zM3 20.500h18" /></svg></PlainButton>
        </Tray>
      </TaskBar>

      <Capture>
        {[0, 50, 100].flatMap((x) => [0, 50, 100].filter((y) => x !== 50 || y !== 50).map((y) => <Handle key={`${x}-${y}`} $x={x} $y={y} />))}
        <SizeTag>1.590×676</SizeTag>
      </Capture>
      <Pointer $x={842} $y={456} width="13" height="22" viewBox="0 0 13 22"><path d="M1 1v16l3.500-3 3 6.500 3-1.500-3-6H12z" fill="#4d4d4d" /></Pointer>
      <Pointer $x={1007} $y={654} width="23" height="23" viewBox="0 0 23 23"><path d="M6 22L1 12c-1-2 1.500-2.500 2.500-1L5 13 4 5c0-2 2.200-2 2.600 0L8 10 8 2.500c0-2 2.600-2 2.700 0L11.300 10l1-7.500c.2-2 2.700-1.600 2.500.3L14.500 10.500 17 5c.8-1.700 3-.8 2.500 1l-1 5 2-.5c2-.2 2.200 1.500 1 2.500L16.500 22z" fill="#4d4d4d" /></Pointer>
    </Screen>
  );
}
